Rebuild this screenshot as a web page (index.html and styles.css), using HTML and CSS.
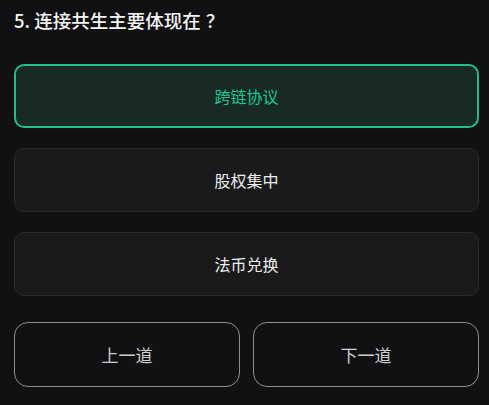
FILE: index.html
```html
<!DOCTYPE html>
<html lang="zh">
<head>
<meta charset="utf-8">
<link rel="stylesheet" href="styles.css">
</head>
<body>
<div class="quiz">
  <h2 class="question">5. 连接共生主要体现在<span class="qmark">？</span></h2>
  <div class="options">
    <div class="option selected">跨链协议</div>
    <div class="option">股权集中</div>
    <div class="option">法币兑换</div>
  </div>
  <div class="nav">
    <button class="nav-btn">上一道</button>
    <button class="nav-btn">下一道</button>
  </div>
</div>
</body>
</html>
```
FILE: styles.css
```css
html, body {
  margin: 0;
  background: #111113;
}
body {
  font-family: "Noto Sans CJK SC", "Noto Sans", sans-serif;
  color: #f2f2f2;
}
.quiz {
  padding: 7px 10px 0 14px;
  display: flex;
  flex-direction: column;
}
.question {
  margin: 0;
  font-size: 18.5px;
  line-height: 26px;
  font-weight: 500;
  color: #f4f4f4;
}
.qmark {
  margin-left: 5px;
}
.options {
  margin-top: 31px;
  display: flex;
  flex-direction: column;
  gap: 20px;
}
.option {
  height: 64px;
  box-sizing: border-box;
  border: 1px solid #2a2a2d;
  border-radius: 10px;
  background: #1a1a1c;
  display: flex;
  align-items: center;
  justify-content: center;
  font-size: 16px;
  color: #ededed;
}
.option.selected {
  border: 2px solid #1fbf8a;
  background: #182a25;
  color: #23c48e;
}
.nav {
  margin-top: 26px;
  display: grid;
  grid-template-columns: 1fr 1fr;
  gap: 13px;
}
.nav-btn {
  height: 65px;
  box-sizing: border-box;
  border: 1.5px solid #8f8f8f;
  border-radius: 14px;
  background: #111113;
  color: #cfcfcf;
  font-family: "Noto Sans CJK SC", "Noto Sans", sans-serif;
  font-size: 17px;
}
```
